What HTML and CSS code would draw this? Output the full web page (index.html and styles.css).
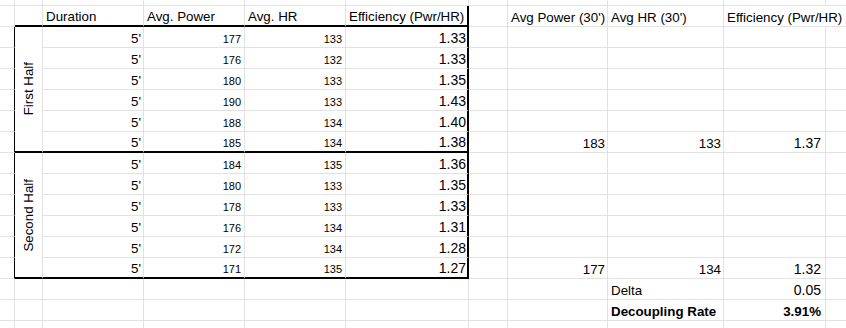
FILE: index.html
```html
<!DOCTYPE html>
<html>
<head>
<meta charset="utf-8">
<link rel="stylesheet" href="styles.css">
</head>
<body>
<div class="sheet">
  <!-- top partial row -->
  <div class="c"></div><div class="c"></div><div class="c"></div><div class="c"></div><div class="c"></div><div class="c"></div><div class="c"></div><div class="c"></div><div class="c"></div><div class="c"></div><div class="c"></div>
  <!-- header row -->
  <div class="c"></div><div class="c bb"></div><div class="c bb">Duration</div><div class="c bb">Avg. Power</div><div class="c bb">Avg. HR</div><div class="c bb br">Efficiency (Pwr/HR)</div><div class="c"></div><div class="c">Avg Power (30')</div><div class="c">Avg HR (30')</div><div class="c over">Efficiency (Pwr/HR)</div><div class="c"></div>
  <!-- first half -->
  <div class="c bra"></div><div class="c lab bb"><span>First Half</span></div><div class="c r">5'</div><div class="c r s">177</div><div class="c r s">133</div><div class="c r e br">1.33</div><div class="c"></div><div class="c"></div><div class="c"></div><div class="c"></div><div class="c"></div>
  <div class="c bra"></div><div class="c r">5'</div><div class="c r s">176</div><div class="c r s">132</div><div class="c r e br">1.33</div><div class="c"></div><div class="c"></div><div class="c"></div><div class="c"></div><div class="c"></div>
  <div class="c bra"></div><div class="c r">5'</div><div class="c r s">180</div><div class="c r s">133</div><div class="c r e br">1.35</div><div class="c"></div><div class="c"></div><div class="c"></div><div class="c"></div><div class="c"></div>
  <div class="c bra"></div><div class="c r">5'</div><div class="c r s">190</div><div class="c r s">133</div><div class="c r e br">1.43</div><div class="c"></div><div class="c"></div><div class="c"></div><div class="c"></div><div class="c"></div>
  <div class="c bra"></div><div class="c r">5'</div><div class="c r s">188</div><div class="c r s">134</div><div class="c r e br">1.40</div><div class="c"></div><div class="c"></div><div class="c"></div><div class="c"></div><div class="c"></div>
  <div class="c bra"></div><div class="c r bb">5'</div><div class="c r s bb">185</div><div class="c r s bb">134</div><div class="c r e br bb">1.38</div><div class="c"></div><div class="c r">183</div><div class="c r">133</div><div class="c r e j">1.37</div><div class="c"></div>
  <!-- second half -->
  <div class="c bra"></div><div class="c lab bb"><span>Second Half</span></div><div class="c r">5'</div><div class="c r s">184</div><div class="c r s">135</div><div class="c r e br">1.36</div><div class="c"></div><div class="c"></div><div class="c"></div><div class="c"></div><div class="c"></div>
  <div class="c bra"></div><div class="c r">5'</div><div class="c r s">180</div><div class="c r s">133</div><div class="c r e br">1.35</div><div class="c"></div><div class="c"></div><div class="c"></div><div class="c"></div><div class="c"></div>
  <div class="c bra"></div><div class="c r">5'</div><div class="c r s">178</div><div class="c r s">133</div><div class="c r e br">1.33</div><div class="c"></div><div class="c"></div><div class="c"></div><div class="c"></div><div class="c"></div>
  <div class="c bra"></div><div class="c r">5'</div><div class="c r s">176</div><div class="c r s">134</div><div class="c r e br">1.31</div><div class="c"></div><div class="c"></div><div class="c"></div><div class="c"></div><div class="c"></div>
  <div class="c bra"></div><div class="c r">5'</div><div class="c r s">172</div><div class="c r s">134</div><div class="c r e br">1.28</div><div class="c"></div><div class="c"></div><div class="c"></div><div class="c"></div><div class="c"></div>
  <div class="c bra"></div><div class="c r bb">5'</div><div class="c r s bb">171</div><div class="c r s bb">135</div><div class="c r e br bb">1.27</div><div class="c"></div><div class="c r">177</div><div class="c r">134</div><div class="c r e j">1.32</div><div class="c"></div>
  <!-- summary rows -->
  <div class="c"></div><div class="c"></div><div class="c"></div><div class="c"></div><div class="c"></div><div class="c"></div><div class="c"></div><div class="c"></div><div class="c">Delta</div><div class="c r e j">0.05</div><div class="c"></div>
  <div class="c"></div><div class="c"></div><div class="c"></div><div class="c"></div><div class="c"></div><div class="c"></div><div class="c"></div><div class="c"></div><div class="c b">Decoupling Rate</div><div class="c r b j">3.91%</div><div class="c"></div>
  <div class="c"></div><div class="c"></div><div class="c"></div><div class="c"></div><div class="c"></div><div class="c"></div><div class="c"></div><div class="c"></div><div class="c"></div><div class="c"></div><div class="c"></div>
</div>
</body>
</html>
```
FILE: styles.css
```css
html, body {
  margin: 0;
  padding: 0;
  background: #ffffff;
}
body {
  width: 846px;
  height: 328px;
  overflow: hidden;
  font-family: "Liberation Sans", Arial, sans-serif;
  font-size: 13.33px;
  color: #000000;
}
.sheet {
  display: grid;
  grid-template-columns: 15px 28px 101px 101px 101px 123px 39px 100px 116px 102px 40px;
  grid-template-rows: 6px 21px repeat(12, 21px) 21px 21px 21px;
}
.c {
  box-sizing: border-box;
  border-right: 1px solid #e2e2e2;
  border-bottom: 1px solid #e2e2e2;
  display: flex;
  align-items: flex-end;
  justify-content: flex-start;
  padding: 0 2px 1px 3px;
  line-height: 15px;
  white-space: nowrap;
  overflow: hidden;
  min-width: 0;
}
.r {
  justify-content: flex-end;
}
.s {
  font-size: 11px;
  line-height: 14px;
  padding-right: 3px;
}
.e {
  font-size: 14px;
  line-height: 15px;
  padding-right: 1px;
}
.j {
  padding-right: 4px;
}
.b {
  font-weight: bold;
}
.bb {
  border-bottom: 2px solid #000000;
}
.br {
  border-right: 2px solid #000000;
}
.bra {
  border-right: 1px solid #000000;
}
.over {
  overflow: visible;
  border-right-color: transparent;
  position: relative;
  z-index: 1;
}
.lab {
  grid-row: span 6;
  align-items: center;
  justify-content: center;
  padding: 0;
}
.lab span {
  writing-mode: vertical-rl;
  transform: rotate(180deg);
  line-height: 15px;
}
```
